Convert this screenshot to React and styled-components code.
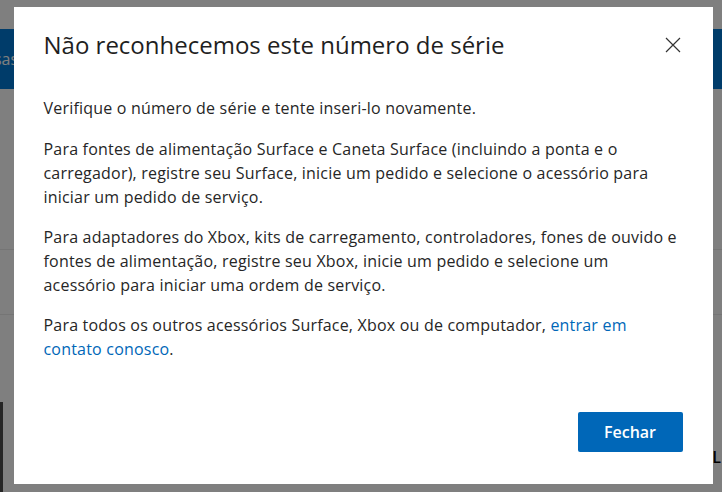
import React from 'react';
import styled, {createGlobalStyle} from 'styled-components';

const GlobalStyle = createGlobalStyle`
  html, body {
    margin: 0;
    padding: 0;
    background: #fff;
    font-family: "Segoe UI", "Open Sans", "Noto Sans", sans-serif;
    overflow: hidden;
  }
`

const Page = styled.div`
  position: relative;
  width: 722px;
  height: 492px;
  background: #fff;
  padding-top: 29px;
  box-sizing: border-box;
`

const Header = styled.div`
  height: 60px;
  background: #0078d4;
  display: flex;
  align-items: center;
  color: #fff;
  font-size: 16px;
  overflow: hidden;
  span {
    margin-left: -56px;
  }
`

const Rule = styled.div`
  border-top: 1px solid #ebebeb;
  margin-top: ${p => p.gap}px;
`

const FootRow = styled.div`
  display: flex;
  justify-content: space-between;
  align-items: flex-start;
  margin-top: 87px;
  height: 90px;
  .edge {
    width: 3px;
    height: 90px;
    background: #4a4a4a;
  }
  .letter {
    margin-top: 44px;
    margin-right: 1px;
    font-size: 16px;
    font-weight: 600;
    color: #000;
  }
`

const Overlay = styled.div`
  position: fixed;
  inset: 0;
  background: rgba(0, 0, 0, 0.5);
  display: flex;
  align-items: center;
  justify-content: center;
`

const Dialog = styled.div`
  width: 699px;
  height: 477px;
  margin-left: 4px;
  margin-top: -1px;
  background: #fff;
  box-sizing: border-box;
  padding: 22px 30px 32px 30px;
  display: flex;
  flex-direction: column;
  color: #262626;
`

const TitleRow = styled.div`
  display: flex;
  justify-content: space-between;
  align-items: center;
  h2 {
    margin: 0;
    font-size: 24px;
    font-weight: 400;
    line-height: 32px;
    color: #1f1f1f;
  }
`

const CloseBtn = styled.button`
  border: none;
  background: none;
  padding: 0;
  margin-right: 2px;
  width: 16px;
  height: 16px;
  display: flex;
  cursor: pointer;
`

const Body = styled.div`
  margin-top: 35px;
  flex: 1;
  font-size: 16px;
  line-height: 24px;
  letter-spacing: 0.2px;
  p {
    margin: 0 0 16px 0;
  }
  p:first-child {
    margin-bottom: 17px;
  }
  a {
    color: #0067b8;
    text-decoration: none;
  }
`

const Footer = styled.div`
  display: flex;
  justify-content: flex-end;
`

const PrimaryButton = styled.button`
  width: 105px;
  height: 40px;
  background: #0067b8;
  color: #fff;
  border: none;
  border-radius: 2px;
  font-family: inherit;
  font-size: 16px;
  font-weight: 600;
  cursor: pointer;
`

export default class App extends React.Component {
  render = () => {
    return (
      <div>
        <GlobalStyle />
        <Page>
          <Header><span>Pesquisas</span></Header>
          <Rule gap={160} />
          <Rule gap={64} />
          <FootRow>
            <div className='edge' />
            <div className='letter'>L</div>
          </FootRow>
        </Page>
        <Overlay>
          <Dialog role='dialog'>
            <TitleRow>
              <h2>Não reconhecemos este número de série</h2>
              <CloseBtn aria-label='Fechar'>
                <svg width='16' height='16' viewBox='0 0 16 16'>
                  <path d='M1 1 L15 15 M15 1 L1 15' stroke='#333' strokeWidth='1.2' fill='none' />
                </svg>
              </CloseBtn>
            </TitleRow>
            <Body>
              <p>Verifique o número de série e tente inseri-lo novamente.</p>
              <p>Para fontes de alimentação Surface e Caneta Surface (incluindo a ponta e o carregador), registre seu Surface, inicie um pedido e selecione o acessório para iniciar um pedido de serviço.</p>
              <p>Para adaptadores do Xbox, kits de carregamento, controladores, fones de ouvido e fontes de alimentação, registre seu Xbox, inicie um pedido e selecione um acessório para iniciar uma ordem de serviço.</p>
              <p>Para todos os outros acessórios Surface, Xbox ou de computador, <a href='#'>entrar em contato conosco</a>.</p>
            </Body>
            <Footer>
              <PrimaryButton>Fechar</PrimaryButton>
            </Footer>
          </Dialog>
        </Overlay>
      </div>
    )
  }
}
